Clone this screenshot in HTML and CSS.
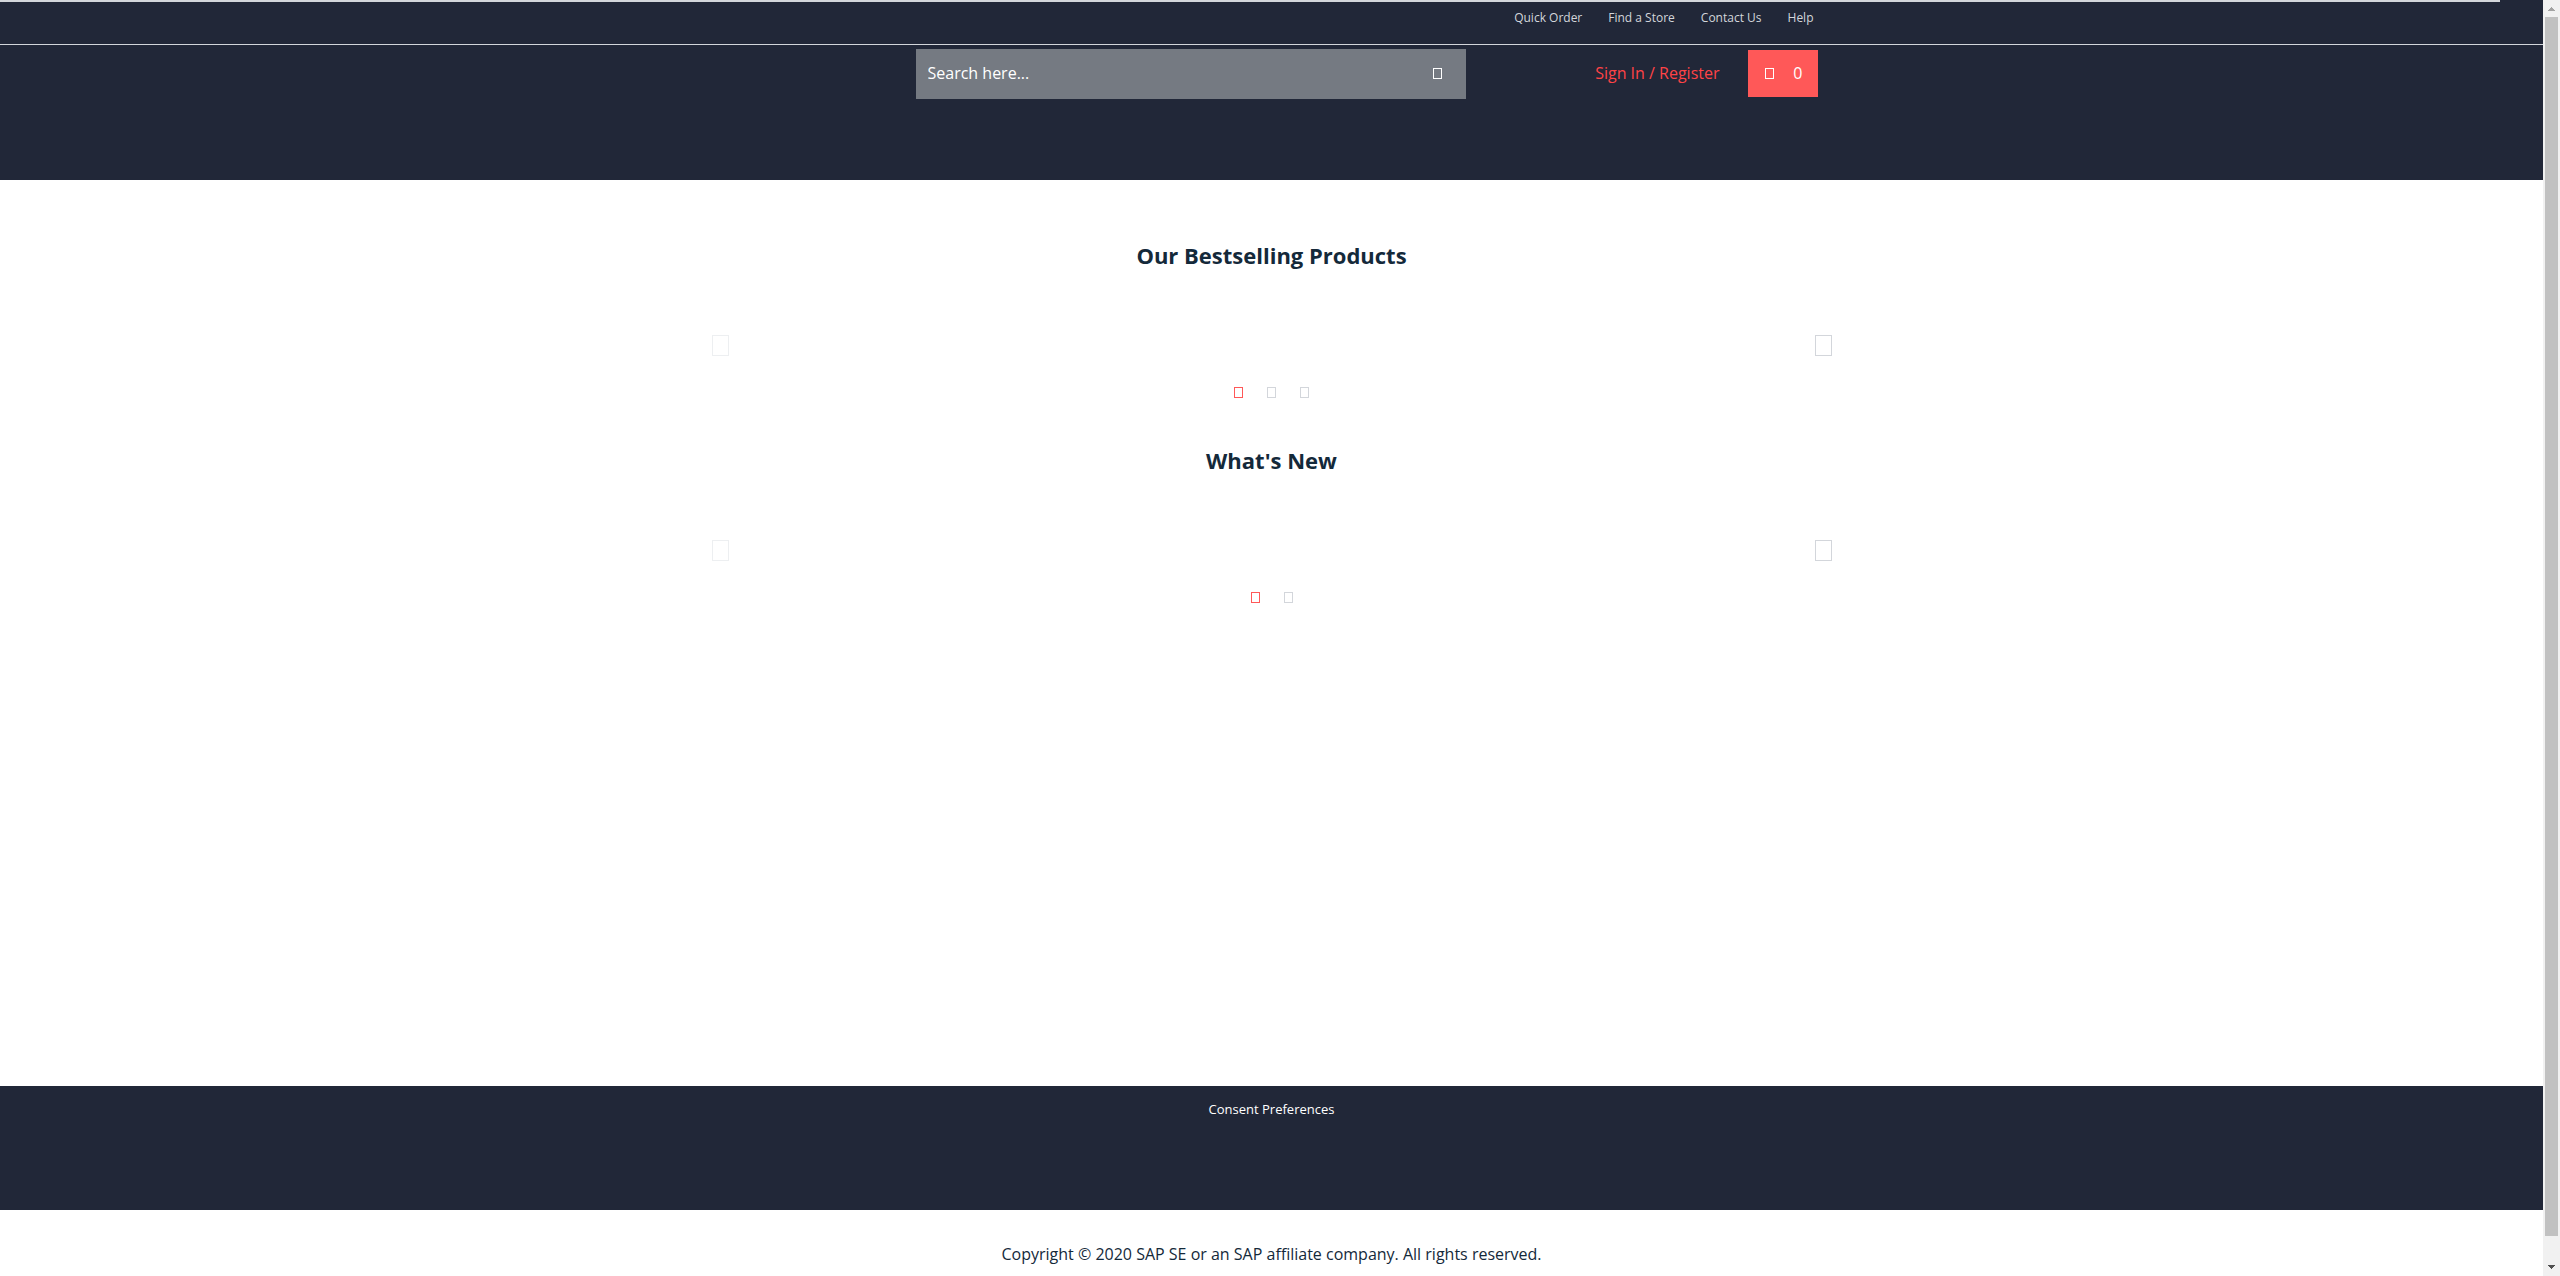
FILE: index.html
```html
<!DOCTYPE html>
<html lang="en">
<head>
<meta charset="utf-8">
<meta name="viewport" content="width=device-width, initial-scale=1">
<title>Storefront</title>
<link rel="stylesheet" href="styles.css">
</head>
<body>
<div class="page">
  <header class="header">
    <div class="progress"></div>
    <div class="top-bar">
      <nav class="container top-nav" aria-label="Site links">
        <a href="#">Quick Order</a>
        <a href="#">Find a Store</a>
        <a href="#">Contact Us</a>
        <a href="#">Help</a>
      </nav>
    </div>
    <div class="container header-main">
      <form class="search">
        <input class="search-input" type="text" placeholder="Search here..." aria-label="Search">
        <button class="search-button" type="submit" aria-label="Submit search"><span class="glyph"></span></button>
      </form>
      <a class="sign-in" href="#">Sign In / Register</a>
      <button class="cart" type="button" aria-label="Cart, 0 items"><span class="glyph"></span><span>0</span></button>
    </div>
  </header>

  <main class="main container">
    <section class="carousel">
      <h2>Our Bestselling Products</h2>
      <div class="arrows">
        <button type="button" aria-label="Previous products" disabled><span class="glyph glyph-large"></span></button>
        <button type="button" aria-label="Next products"><span class="glyph glyph-large"></span></button>
      </div>
      <div class="dots">
        <button class="active" type="button" aria-label="Page 1"><span class="glyph"></span></button>
        <button type="button" aria-label="Page 2"><span class="glyph"></span></button>
        <button type="button" aria-label="Page 3"><span class="glyph"></span></button>
      </div>
    </section>
    <section class="carousel">
      <h2>What's New</h2>
      <div class="arrows">
        <button type="button" aria-label="Previous new items" disabled><span class="glyph glyph-large"></span></button>
        <button type="button" aria-label="Next new items"><span class="glyph glyph-large"></span></button>
      </div>
      <div class="dots">
        <button class="active" type="button" aria-label="Page 1"><span class="glyph"></span></button>
        <button type="button" aria-label="Page 2"><span class="glyph"></span></button>
      </div>
    </section>
  </main>

  <footer>
    <div class="footer-links"><button type="button">Consent Preferences</button></div>
    <p class="copyright">Copyright © 2020 SAP SE or an SAP affiliate company. All rights reserved.</p>
  </footer>
</div>
<div class="scrollbar" aria-hidden="true">
  <svg width="7" height="4" viewBox="0 0 7 4" shape-rendering="crispEdges"><path d="M3 0h1v1h1v1h1v1h1v1H0V3h1V2h1V1h1z" fill="#a3a3a3"/></svg>
  <div class="thumb"></div>
  <svg width="7" height="4" viewBox="0 0 7 4" shape-rendering="crispEdges"><path d="M0 0h7v1H6v1H5v1H4v1H3V3H2V2H1V1H0z" fill="#505050"/></svg>
</div>
</body>
</html>
```
FILE: styles.css
```css
:root {
  --dark: #212738;
  --ink: #14293a;
  --light: #d3d6db;
  --accent: #ff5858;
}

* {
  box-sizing: border-box;
}

body {
  display: grid;
  grid-template-columns: minmax(0, 1fr) 17px;
  min-height: 100vh;
  margin: 0;
  background: #fff;
  color: var(--ink);
  font: 16px/24px "Open Sans", sans-serif;
}

button,
input {
  margin: 0;
  padding: 0;
  border: 0;
  border-radius: 0;
  background: none;
  color: inherit;
  font: inherit;
}

button {
  cursor: pointer;
}

a {
  color: inherit;
  text-decoration: none;
}

.page {
  display: flex;
  flex-direction: column;
  min-height: 100vh;
}

.container {
  width: 100%;
  max-width: 1140px;
  margin: 0 auto;
}

.glyph {
  display: block;
  width: 9px;
  height: 11px;
  border: 1px solid currentColor;
}

.glyph-large {
  width: 17px;
  height: 21px;
}

/* Header */
.header {
  height: 180px;
  background: var(--dark);
}

.progress {
  width: calc(100% - 43px);
  height: 2px;
  background: var(--light);
}

.top-bar {
  height: 43px;
  border-bottom: 1px solid var(--light);
}

.top-nav {
  display: flex;
  justify-content: flex-end;
  gap: 26px;
  padding: 6px 28px 0 0;
  color: var(--light);
  font-size: 12px;
  line-height: 20px;
}

.header-main {
  display: flex;
  align-items: flex-start;
  padding: 4px 24px 0 214px;
}

.search {
  display: flex;
  flex: 0 1 550px;
  height: 50px;
  padding-bottom: 2px;
  background: #757a82;
  color: #fff;
}

.search-input {
  flex: 1;
  min-width: 0;
  padding-left: 12px;
  outline: 0;
}

.search-input::placeholder {
  color: #fff;
  opacity: 1;
}

.search-button {
  display: grid;
  place-items: center;
  width: 56px;
}

.sign-in {
  margin-left: auto;
  color: #ff4346;
  line-height: 48px;
}

.cart {
  display: flex;
  align-items: center;
  justify-content: space-between;
  width: 70px;
  height: 47px;
  margin: 1px 0 0 28px;
  padding: 0 15px 1px 17px;
  background: var(--accent);
  color: #fff;
}

/* Product carousels */
.main {
  flex: 1;
  padding-top: 59px;
}

.carousel {
  height: 205px;
}

.carousel h2 {
  margin: 0;
  font-size: 22px;
  line-height: 32px;
  font-weight: 700;
  text-align: center;
}

.arrows {
  display: flex;
  justify-content: space-between;
  padding: 64px 10px 0;
  color: var(--light);
}

.arrows button:disabled {
  opacity: 0.4;
}

.dots {
  display: flex;
  justify-content: center;
  padding-top: 31px;
}

.dots button {
  padding: 0 12px;
  color: var(--light);
}

.dots .active {
  color: var(--accent);
}

/* Footer */
.footer-links {
  height: 124px;
  padding-top: 13px;
  background: var(--dark);
  color: #fff;
  font-size: 13px;
  line-height: 20px;
  text-align: center;
}

.copyright {
  margin: 0;
  padding: 32px 0 10px;
  text-align: center;
}

/* Scroll track */
.scrollbar {
  display: flex;
  position: sticky;
  top: 0;
  flex-direction: column;
  align-items: center;
  height: 100vh;
  padding: 7px 0;
  background: #f1f1f1;
}

.thumb {
  flex: 1;
  width: 13px;
  margin: 6px 0 29px;
  background: #c1c1c1;
}
```
